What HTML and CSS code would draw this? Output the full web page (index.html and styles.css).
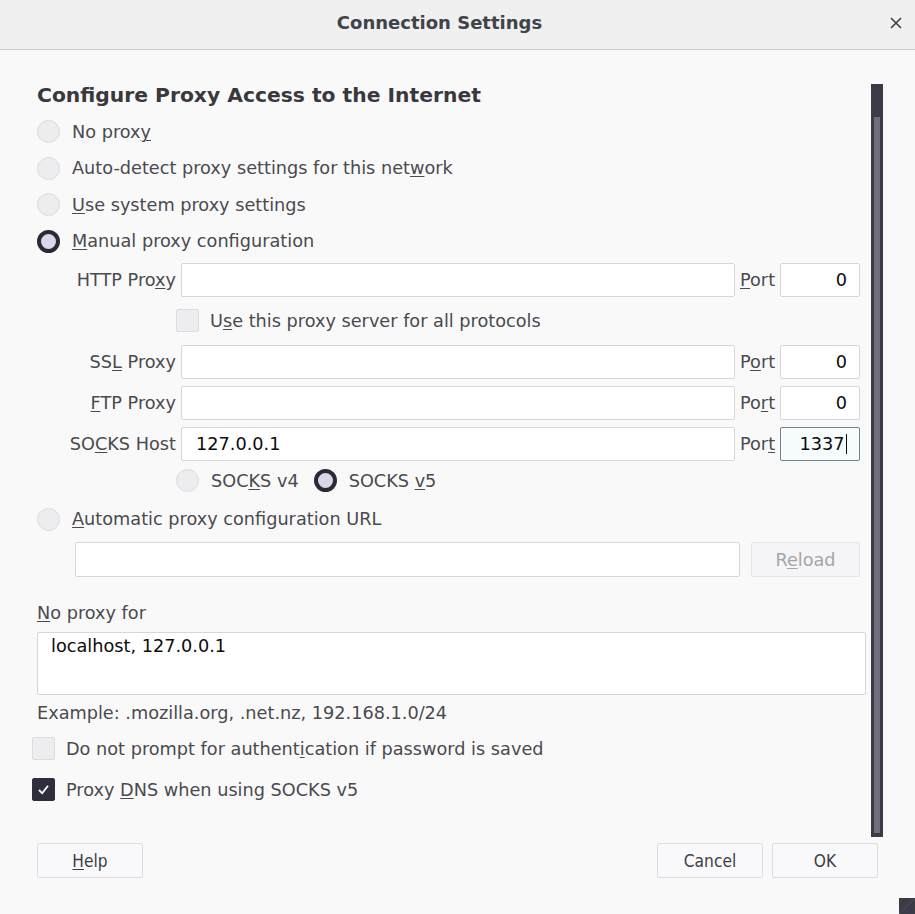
FILE: index.html
```html
<!DOCTYPE html>
<html>
<head>
  <meta charset="UTF-8">
  <title>Connection Settings</title>
  <link rel="stylesheet" href="styles.css">
</head>

<body>
  <div class="titlebar">
    <span class="title">Connection Settings</span>
    <span class="close">
      <svg width="12" height="12" viewBox="0 0 12 12"><path d="M1 1 L11 11 M11 1 L1 11" stroke="#3b3e45" stroke-width="1.6" fill="none"/></svg>
    </span>
  </div>

  <div class="main">
    <div class="content">
      <h1 class="heading">Configure Proxy Access to the Internet</h1>

      <div class="opt first"><span class="radio"></span><span>No prox<u>y</u></span></div>
      <div class="opt"><span class="radio"></span><span>Auto-detect proxy settings for this net<u>w</u>ork</span></div>
      <div class="opt"><span class="radio"></span><span><u>U</u>se system proxy settings</span></div>
      <div class="opt"><span class="radio checked"></span><span><u>M</u>anual proxy configuration</span></div>

      <div class="proxy-row http">
        <span class="proxy-label">HTTP Pro<u>x</u>y</span>
        <input class="field host" type="text" value="">
        <span class="port-label"><u>P</u>ort</span>
        <input class="field port" type="text" value="0">
      </div>

      <div class="check-row indent">
        <span class="checkbox"></span><span>U<u>s</u>e this proxy server for all protocols</span>
      </div>

      <div class="proxy-row flush">
        <span class="proxy-label">SS<u>L</u> Proxy</span>
        <input class="field host" type="text" value="">
        <span class="port-label">P<u>o</u>rt</span>
        <input class="field port" type="text" value="0">
      </div>
      <div class="proxy-row">
        <span class="proxy-label"><u>F</u>TP Proxy</span>
        <input class="field host" type="text" value="">
        <span class="port-label">Po<u>r</u>t</span>
        <input class="field port" type="text" value="0">
      </div>
      <div class="proxy-row">
        <span class="proxy-label">SO<u>C</u>KS Host</span>
        <input class="field host" type="text" value="127.0.0.1">
        <span class="port-label">Por<u>t</u></span>
        <div class="field port focused"><span>1337</span><span class="caret"></span></div>
      </div>

      <div class="socks-row">
        <span class="socks-opt"><span class="radio"></span><span>SOC<u>K</u>S v4</span></span>
        <span class="socks-opt"><span class="radio checked"></span><span>SOCKS <u>v</u>5</span></span>
      </div>

      <div class="opt"><span class="radio"></span><span><u>A</u>utomatic proxy configuration URL</span></div>

      <div class="url-row">
        <input class="field url" type="text" value="">
        <button class="btn reload" disabled>R<u>e</u>load</button>
      </div>

      <div class="label-line"><u>N</u>o proxy for</div>
      <textarea class="noproxy">localhost, 127.0.0.1</textarea>
      <div class="example">Example: .mozilla.org, .net.nz, 192.168.1.0/24</div>

      <div class="check-row bottom first-check">
        <span class="checkbox"></span><span>Do not prompt for authent<u>i</u>cation if password is saved</span>
      </div>
      <div class="check-row bottom">
        <span class="checkbox checked">
          <svg width="15" height="15" viewBox="0 0 15 15"><path d="M3 8 L6.2 11.2 L12 3.8" stroke="#ffffff" stroke-width="1.8" fill="none"/></svg>
        </span><span>Proxy <u>D</u>NS when using SOCKS v5</span>
      </div>
    </div>

    <div class="scrollbar"><div class="thumb"></div></div>
  </div>

  <div class="footer">
    <button class="btn"><u>H</u>elp</button>
    <div class="footer-right">
      <button class="btn">Cancel</button>
      <button class="btn">OK</button>
    </div>
  </div>

  <div class="grip"></div>
</body>
</html>
```

FILE: styles.css
```css
body {
  margin: 0;
  width: 915px;
  height: 914px;
  overflow: hidden;
  background: #f9f9fa;
  font-family: "DejaVu Sans", sans-serif;
  font-size: 17.7px;
  color: #4a4a4f;
  position: relative;
}

u {
  text-decoration-thickness: 1px;
  text-underline-offset: 2px;
}

.titlebar {
  height: 49px;
  border-bottom: 1px solid #cdcdd0;
  background: #f0f0f1;
  display: flex;
  align-items: center;
  justify-content: center;
  padding-right: 36px;
  position: relative;
}

.title {
  font-weight: bold;
  font-size: 18px;
  color: #40434a;
  margin-top: -4px;
}

.close {
  position: absolute;
  right: 13px;
  top: 17px;
  width: 12px;
  height: 12px;
  display: flex;
}

.main {
  display: flex;
  height: 787px;
  padding-top: 34px;
  box-sizing: border-box;
}

.content {
  width: 871px;
  overflow: hidden;
}

.heading {
  margin: 0 0 0 37px;
  height: 22px;
  line-height: 22px;
  font-size: 20.3px;
  font-weight: bold;
  color: #38383d;
}

.opt {
  display: flex;
  align-items: center;
  gap: 12px;
  height: 36.4px;
  margin-left: 37px;
}

.opt.first {
  margin-top: 7.8px;
}

.radio {
  width: 21px;
  height: 21px;
  border-radius: 50%;
  border: 1px solid #dcdce0;
  background: #ededf0;
  flex: none;
}

.radio.checked {
  width: 15px;
  height: 15px;
  border: 4px solid #2b2a33;
  background: #d8d8ea;
}

.proxy-row {
  display: flex;
  align-items: center;
  height: 34px;
  margin-top: 7px;
}

.proxy-row.http {
  margin-top: 3.6px;
}

.proxy-row.flush {
  margin-top: 0;
}

.proxy-label {
  width: 139px;
  margin-left: 37px;
  margin-right: 5px;
  text-align: right;
  white-space: nowrap;
}

.field {
  box-sizing: border-box;
  height: 34px;
  border: 1px solid #d7d7db;
  border-radius: 2px;
  background: #ffffff;
  font-family: "DejaVu Sans", sans-serif;
  font-size: 17.7px;
  color: #0c0c0d;
  padding: 0 14px;
  outline: none;
}

.host {
  width: 554px;
}

.port-label {
  width: 35px;
  margin: 0 5px;
}

.port {
  width: 80px;
  text-align: right;
  padding-right: 12px;
}

.port.focused {
  display: flex;
  align-items: center;
  justify-content: flex-end;
  padding-right: 12px;
  border-color: #6d858b;
  background: #f6fbfb;
}

.caret {
  width: 1.5px;
  height: 20px;
  background: #0c0c0d;
  margin-left: 1px;
}

.check-row {
  display: flex;
  align-items: center;
  gap: 11px;
}

.check-row.indent {
  height: 48px;
  margin-left: 176px;
}

.checkbox {
  width: 21px;
  height: 21px;
  border: 1px solid #dcdce0;
  border-radius: 2px;
  background: #ededf0;
  flex: none;
  display: flex;
  align-items: center;
  justify-content: center;
}

.checkbox.checked {
  background: #2f2f3b;
  border-color: #2f2f3b;
}

.socks-row {
  display: flex;
  align-items: center;
  height: 40px;
  margin-left: 176px;
  gap: 15px;
}

.socks-opt {
  display: flex;
  align-items: center;
  gap: 12px;
}

.url-row {
  display: flex;
  align-items: center;
  margin: 5px 0 0 75px;
  gap: 11px;
}

.url {
  width: 665px;
  height: 35px;
}

.btn {
  box-sizing: border-box;
  height: 35px;
  width: 106px;
  border: 1px solid #dcdce0;
  border-radius: 2px;
  background: #f9f9fb;
  font-family: "DejaVu Sans Condensed", "DejaVu Sans", sans-serif;
  font-stretch: condensed;
  font-size: 17.2px;
  color: #3b3e45;
  padding: 0;
}

.btn.reload {
  width: 109px;
  font-family: "DejaVu Sans", sans-serif;
  font-stretch: normal;
  font-size: 17.7px;
  background: #f5f5f7;
  border-color: #e6e6e9;
  color: #a4a4a9;
}

.label-line {
  margin: 25.6px 0 0 37px;
  line-height: 20px;
}

.noproxy {
  display: block;
  box-sizing: border-box;
  margin: 9px 0 0 37px;
  width: 829px;
  height: 63px;
  border: 1px solid #d7d7db;
  border-radius: 2px;
  background: #ffffff;
  font-family: "DejaVu Sans", sans-serif;
  font-size: 17.7px;
  line-height: 20px;
  color: #0c0c0d;
  padding: 3px 13px;
  resize: none;
  overflow: hidden;
}

.example {
  margin: 8px 0 0 37px;
  line-height: 20px;
}

.check-row.bottom {
  height: 41px;
  margin-left: 32px;
}

.check-row.first-check {
  margin-top: 5.5px;
}

.scrollbar {
  width: 12px;
  height: 753px;
  background: #3b3b47;
  box-sizing: border-box;
  padding: 33px 3px 4px 3px;
  display: flex;
}

.thumb {
  flex: 1;
  background: #6f6f7b;
}

.footer {
  display: flex;
  justify-content: space-between;
  padding: 6px 37px 0 37px;
}

.footer-right {
  display: flex;
  gap: 9px;
}

.grip {
  position: absolute;
  right: 0;
  bottom: 0;
  width: 16px;
  height: 16px;
  background: linear-gradient(135deg, #3a3b45 45%, #4a4b56 50%, #3a3b45 55%);
}
```
